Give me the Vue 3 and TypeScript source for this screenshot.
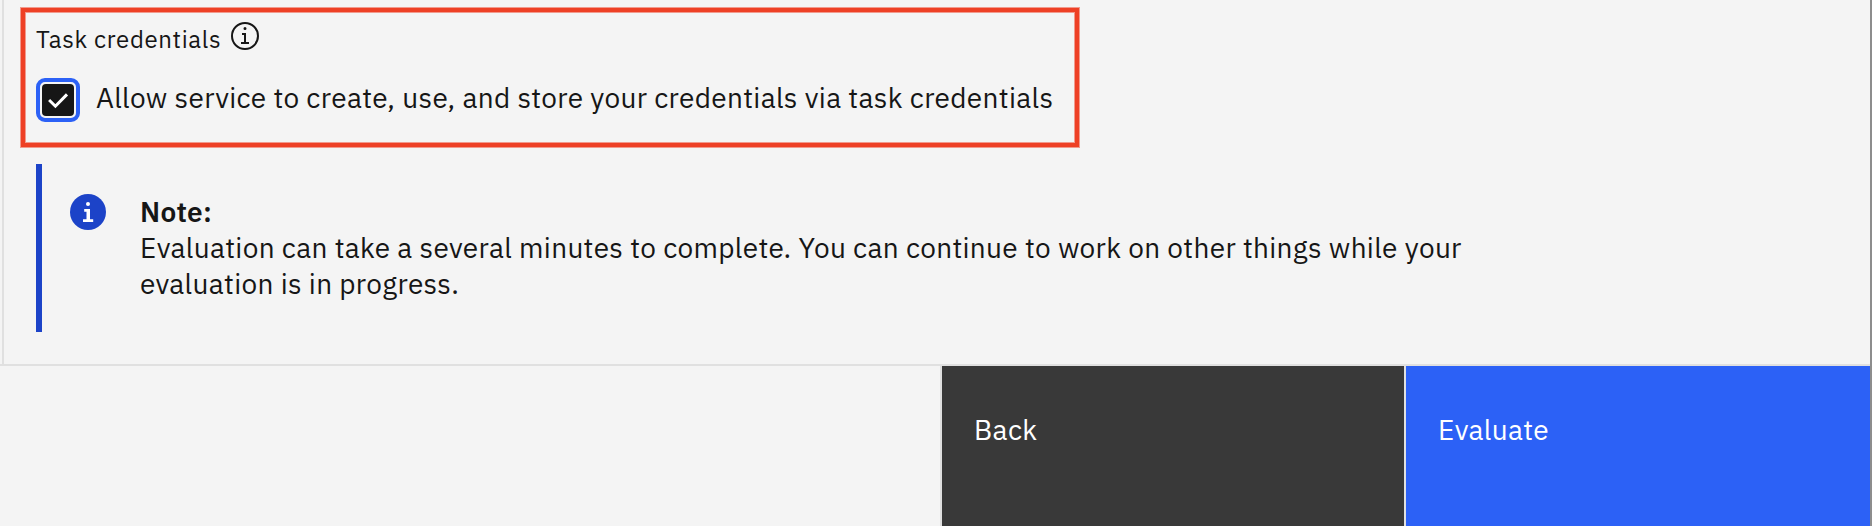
<script setup lang="ts">
import { ref } from 'vue'

const allowed = ref(true)
</script>

<template>
  <div class="dialog">
    <main class="body">
      <section class="credentials">
        <div class="label-row">
          <span class="label">Task credentials</span>
          <svg class="info" viewBox="0 0 16 16" aria-hidden="true">
            <path d="M8.5 11V6.5h-2v1h1V11H6v1h4v-1zM8 3.5a.75.75 0 1 0 0 1.5.75.75 0 0 0 0-1.5z" />
            <path d="M8 15a7 7 0 1 1 7-7 7 7 0 0 1-7 7zM8 2a6 6 0 1 0 6 6 6 6 0 0 0-6-6z" />
          </svg>
        </div>
        <div class="check-row" role="checkbox" :aria-checked="allowed" @click="allowed = !allowed">
          <span class="box">
            <svg v-if="allowed" viewBox="0 0 32 32" aria-hidden="true">
              <path d="M7.1 16 13.4 22.2 25 10.4" />
            </svg>
          </span>
          <span class="check-text">Allow service to create, use, and store your credentials via task credentials</span>
        </div>
      </section>
      <section class="note">
        <svg class="note-icon" viewBox="0 0 36 36" aria-hidden="true">
          <circle cx="18" cy="18" r="18" />
          <path d="M14.2 15h5.8v10.2h3.2V28H13v-2.8h3.5v-7.4h-2.3z" />
          <circle class="dot" cx="18" cy="10" r="2" />
        </svg>
        <div class="note-text">
          <strong>Note:</strong>
          <p>Evaluation can take a several minutes to complete. You can continue to work on other things while your evaluation is in progress.</p>
        </div>
      </section>
    </main>
    <footer class="footer">
      <button class="btn back" type="button">Back</button>
      <button class="btn evaluate" type="button">Evaluate</button>
    </footer>
  </div>
</template>

<style>
body {
  margin: 0;
  background: #f4f4f4;
}
</style>

<style scoped>
.dialog {
  box-sizing: border-box;
  width: 1872px;
  height: 526px;
  display: flex;
  flex-direction: column;
  overflow: hidden;
  background: #f4f4f4;
  border-right: 2px solid #8d8d8d;
  color: #161616;
  font-family: "IBM Plex Sans", Roboto, sans-serif;
  font-size: 28px;
  line-height: 36px;
  letter-spacing: 0.32px;
}
.body {
  box-sizing: border-box;
  height: 364px;
  margin-left: 2px;
  padding-top: 8px;
  border-left: 2px solid #e0e0e0;
}
.credentials {
  box-sizing: border-box;
  width: 1058px;
  height: 139px;
  margin-left: 17px;
  padding: 8px 11px;
  border: 4px solid #ee4025;
  box-shadow: 0 0 0 1px rgba(238, 64, 37, 0.5), inset 0 0 0 1px rgba(238, 64, 37, 0.5);
}
.label-row {
  display: flex;
  height: 32px;
}
.label {
  width: 193px;
  padding-top: 3px;
  font-size: 24px;
  line-height: 32px;
  letter-spacing: 0.64px;
  white-space: nowrap;
}
.info {
  width: 32px;
  height: 32px;
  fill: #161616;
}
.check-row {
  display: flex;
  align-items: flex-start;
  margin-top: 26px;
}
.box {
  box-sizing: border-box;
  width: 44px;
  height: 44px;
  padding: 2px;
  border: 4px solid #2c61f6;
  border-radius: 9px;
  background: #f4f4f4;
}
.box svg {
  display: block;
  width: 32px;
  height: 32px;
  border-radius: 4px;
  background: #161616;
  fill: none;
  stroke: #fff;
  stroke-width: 3;
}
.check-text {
  margin: 2px 0 0 16px;
  white-space: nowrap;
}
.note {
  box-sizing: border-box;
  display: flex;
  align-items: flex-start;
  height: 168px;
  margin: 17px 0 0 32px;
  padding: 30px 0 0 28px;
  border-left: 6px solid #1c43c8;
}
.note-icon {
  width: 36px;
  height: 36px;
  margin-right: 34px;
  fill: #1c43c8;
}
.note-icon path,
.note-icon .dot {
  fill: #fff;
}
.note-text {
  width: 1336px;
}
.note-text strong {
  display: block;
  font-weight: 600;
}
.note-text p {
  margin: 0;
}
.footer {
  display: flex;
  justify-content: flex-end;
  gap: 2px;
  height: 160px;
  border-top: 2px solid #e0e0e0;
}
.btn {
  box-sizing: border-box;
  height: 160px;
  margin: 0;
  padding: 46px 32px 0;
  border: 0;
  display: flex;
  align-items: flex-start;
  color: #fff;
  font: inherit;
  letter-spacing: inherit;
}
.back {
  width: 464px;
  border-left: 2px solid #e0e0e0;
  background: #393939;
}
.evaluate {
  width: 464px;
  background: #2c61f6;
  box-shadow: -2px 0 0 #e0e0e0;
}
</style>
